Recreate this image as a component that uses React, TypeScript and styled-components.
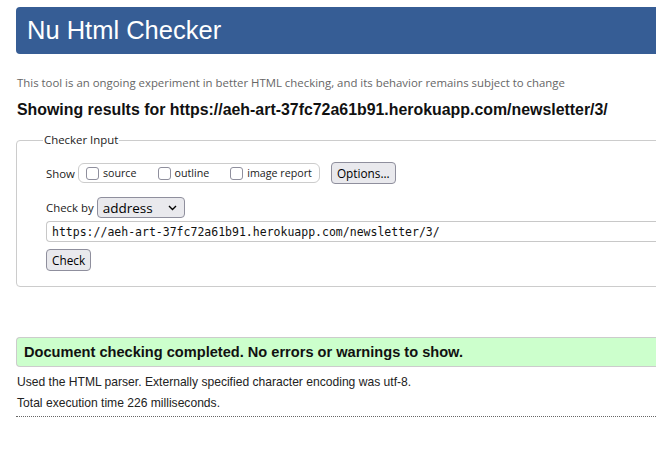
import React from "react";
import styled, { createGlobalStyle } from "styled-components";

const Global = createGlobalStyle`
  html, body { margin: 0; padding: 0; overflow: hidden; background: #fff; }
  body { font-family: "Liberation Sans", Arial, sans-serif; color: #000; }
`;

const Page = styled.div`
  width: 760px;
  padding: 7px 0 0 16px;
  box-sizing: border-box;
`;

const Header = styled.header`
  height: 47px;
  background: #365d95;
  border-radius: 4px;
  display: flex;
  align-items: center;
  padding-left: 11px;
`;

const Title = styled.h1`
  margin: 0;
  font-family: "Liberation Sans", Arial, sans-serif;
  font-weight: normal;
  font-size: 25.5px;
  color: #fff;
  line-height: 1;
`;

const Intro = styled.p`
  margin: 21px 0 0 1px;
  font-family: "Open Sans", "Noto Sans", sans-serif;
  font-size: 11.4px;
  line-height: 16px;
  color: #666;
`;

const ResultHeading = styled.h2`
  margin: 9px 0 0 1px;
  font-family: "Liberation Sans", Arial, sans-serif;
  font-weight: bold;
  font-size: 15.9px;
  line-height: 20px;
  color: #111;
`;

const Fieldset = styled.fieldset`
  margin: 12px 0 0 0;
  border: 1px solid #ccc;
  border-radius: 4px;
  padding: 14px 0 15px 29px;
  font-family: "Open Sans", "Noto Sans", sans-serif;
  font-size: 11.4px;
  color: #222;
`;

const Legend = styled.legend`
  margin-left: -3px;
  padding: 0 1px;
  font-size: 11.4px;
  line-height: 16px;
  color: #222;
`;

const Row = styled.div<{ $mt?: number }>`
  display: flex;
  align-items: center;
  margin-top: ${(p) => p.$mt ?? 0}px;
`;

const Label = styled.span`
  font-family: "Open Sans", "Noto Sans", sans-serif;
  font-size: 11.4px;
  color: #222;
  margin-right: 3px;
`;

const Group = styled.div`
  display: flex;
  align-items: center;
  height: 18px;
  border: 1px solid #ccc;
  border-radius: 6px;
  padding: 0 7px 0 7px;
  gap: 21px;
  margin-right: 11px;
`;

const CheckItem = styled.label`
  display: flex;
  align-items: center;
  gap: 4px;
  font-size: 10.7px;
  color: #222;
`;

const Box = styled.span`
  width: 11px;
  height: 11px;
  border: 1px solid #8f8f9d;
  border-radius: 3px;
  background: #fff;
`;

const Button = styled.button`
  font-family: "Open Sans", "Noto Sans", sans-serif;
  font-size: 11.8px;
  color: #000;
  background: #e9e9ed;
  border: 1px solid #8f8f9d;
  border-radius: 4px;
  height: 22px;
  padding: 0 5px;
  line-height: 20px;
`;

const Select = styled.div`
  display: flex;
  align-items: center;
  justify-content: space-between;
  width: 88px;
  height: 21px;
  box-sizing: border-box;
  background: #e9e9ed;
  border: 1px solid #8f8f9d;
  border-radius: 4px;
  padding: 0 7px 0 5px;
  font-family: "Open Sans", "Noto Sans", sans-serif;
  font-size: 13.5px;
  color: #000;
`;

const UrlInput = styled.div`
  margin-top: 3px;
  height: 21px;
  box-sizing: border-box;
  border: 1px solid #c8c8c8;
  border-radius: 4px 0 0 4px;
  border-right: none;
  padding-left: 5px;
  display: flex;
  align-items: center;
  font-family: "DejaVu Sans Mono", monospace;
  font-size: 11.5px;
  color: #111;
`;

const Success = styled.div`
  margin-top: 50px;
  height: 28px;
  background: #ccffcc;
  border: 1px solid #ccc;
  border-right: none;
  border-radius: 4px 0 0 4px;
  display: flex;
  align-items: center;
  padding-left: 7px;
  font-family: "Liberation Sans", Arial, sans-serif;
  font-weight: bold;
  font-size: 14.6px;
  color: #111;
`;

const Info = styled.p<{ $mt: number }>`
  margin: ${(p) => p.$mt}px 0 0 1px;
  font-family: "Liberation Sans", Arial, sans-serif;
  font-size: 12.1px;
  line-height: 14px;
  color: #222;
`;

const Rule = styled.hr`
  margin: 6px 0 0 0;
  border: none;
  border-top: 1px dotted #666;
`;

const Chevron = () => (
  <svg width="9" height="6" viewBox="0 0 9 6">
    <path d="M1 1l3.5 3.5L8 1" fill="none" stroke="#000" strokeWidth="1.4" />
  </svg>
);

export default function App() {
  return (
    <Page>
      <Global />
      <Header>
        <Title>Nu Html Checker</Title>
      </Header>
      <Intro>
        This tool is an ongoing experiment in better HTML checking, and its behavior remains
        subject to change
      </Intro>
      <ResultHeading>
        Showing results for https://aeh-art-37fc72a61b91.herokuapp.com/newsletter/3/
      </ResultHeading>
      <Fieldset>
        <Legend>Checker Input</Legend>
        <Row>
          <Label>Show</Label>
          <Group>
            <CheckItem>
              <Box />
              source
            </CheckItem>
            <CheckItem>
              <Box />
              outline
            </CheckItem>
            <CheckItem>
              <Box />
              image report
            </CheckItem>
          </Group>
          <Button>Options...</Button>
        </Row>
        <Row $mt={13}>
          <Label>Check by</Label>
          <Select>
            address
            <Chevron />
          </Select>
        </Row>
        <UrlInput>https://aeh-art-37fc72a61b91.herokuapp.com/newsletter/3/</UrlInput>
        <Row $mt={7}>
          <Button>Check</Button>
        </Row>
      </Fieldset>
      <Success>Document checking completed. No errors or warnings to show.</Success>
      <Info $mt={8}>Used the HTML parser. Externally specified character encoding was utf-8.</Info>
      <Info $mt={7}>Total execution time 226 milliseconds.</Info>
      <Rule />
    </Page>
  );
}
